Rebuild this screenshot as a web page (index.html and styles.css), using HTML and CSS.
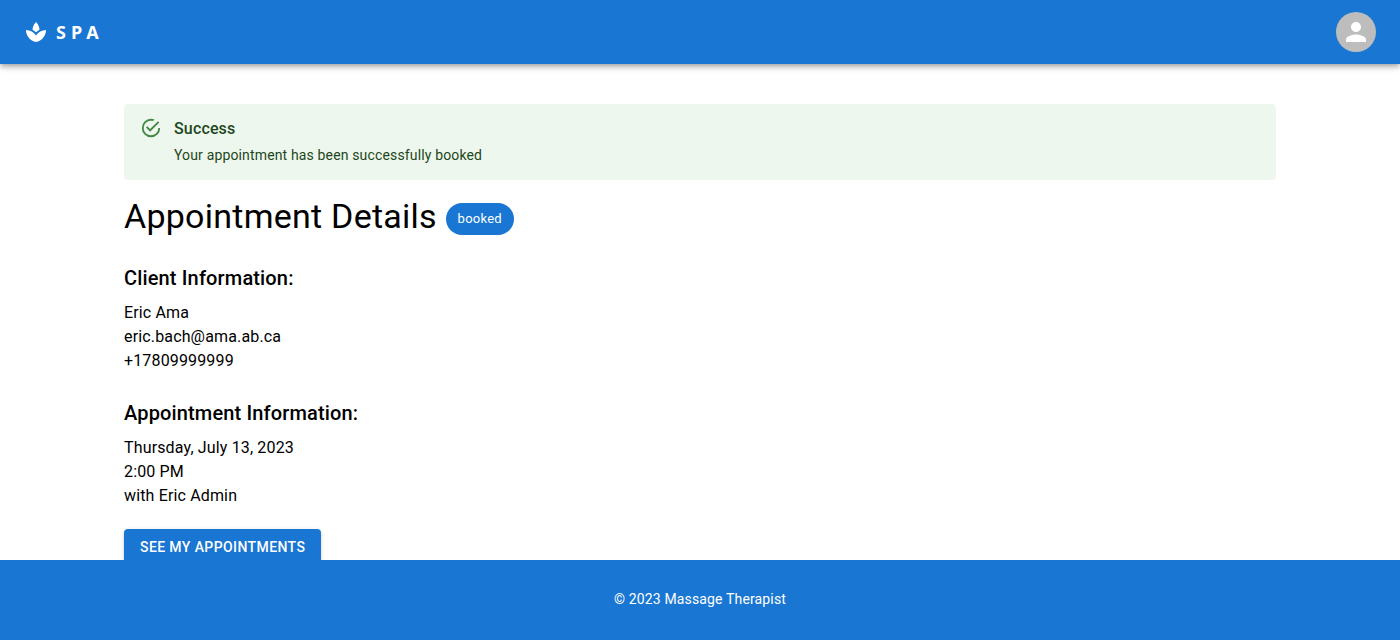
FILE: index.html
```html
<!DOCTYPE html>
<html lang="en">
<head>
<meta charset="utf-8">
<meta name="viewport" content="width=device-width, initial-scale=1">
<title>Spa – Appointment Details</title>
<link rel="stylesheet" href="styles.css">
</head>
<body>
<header class="app-bar">
  <a class="brand" href="#">
    <svg class="brand-icon" viewBox="0 0 24 24" aria-hidden="true"><path d="M8.55 12c-1.07-.71-2.25-1.27-3.53-1.61 1.28.34 2.46.9 3.53 1.61zm10.43-1.61c-1.29.34-2.49.91-3.57 1.64 1.08-.73 2.28-1.3 3.57-1.64z"/><path d="M15.49 9.63c-.18-2.79-1.31-5.51-3.43-7.63-2.14 2.14-3.32 4.86-3.55 7.63 1.28.68 2.46 1.56 3.49 2.63 1.03-1.06 2.21-1.94 3.49-2.63zm-6.5 2.65c-.14-.1-.3-.19-.45-.29.15.11.31.19.45.29zm6.42-.25c-.13.09-.27.16-.4.26.13-.1.27-.17.4-.26zM12 15.45C9.85 12.17 6.18 10 2 10c0 5.32 3.36 9.82 8.03 11.49.63.23 1.29.4 1.97.51.68-.12 1.33-.29 1.97-.51C18.64 19.82 22 15.32 22 10c-4.18 0-7.85 2.17-10 5.45z"/></svg>
    <span class="brand-name">SPA</span>
  </a>
  <button class="avatar" type="button" aria-label="Account">
    <svg class="avatar-icon" viewBox="0 0 24 24" aria-hidden="true"><path d="M12 12c2.21 0 4-1.79 4-4s-1.79-4-4-4-4 1.79-4 4 1.79 4 4 4zm0 2c-2.67 0-8 1.34-8 4v2h16v-2c0-2.66-5.33-4-8-4z"/></svg>
  </button>
</header>
<main class="container">
  <div class="alert" role="alert">
    <svg class="alert-icon" viewBox="0 0 24 24" aria-hidden="true"><path d="M20,12A8,8 0 0,1 12,20A8,8 0 0,1 4,12A8,8 0 0,1 12,4C12.76,4 13.5,4.11 14.2,4.31L15.77,2.74C14.61,2.26 13.34,2 12,2A10,10 0 0,0 2,12A10,10 0 0,0 12,22A10,10 0 0,0 22,12M7.91,10.08L6.5,11.5L11,16L21,6L19.59,4.58L11,13.17L7.91,10.08Z"/></svg>
    <div class="alert-message">
      <div class="alert-title">Success</div>
      <div>Your appointment has been successfully booked</div>
    </div>
  </div>
  <h1 class="page-title">Appointment Details <span class="chip">booked</span></h1>
  <section class="details">
    <h2 class="section-title">Client Information:</h2>
    <p class="line">Eric Ama</p>
    <p class="line">eric.bach@ama.ab.ca</p>
    <p class="line">+17809999999</p>
  </section>
  <section class="details">
    <h2 class="section-title">Appointment Information:</h2>
    <p class="line">Thursday, July 13, 2023</p>
    <p class="line">2:00 PM</p>
    <p class="line">with Eric Admin</p>
  </section>
  <button class="action" type="button">See my appointments</button>
</main>
<footer class="footer">© 2023 Massage Therapist</footer>
</body>
</html>
```
FILE: styles.css
```css
* {
  box-sizing: border-box;
}

body {
  margin: 0;
  background: #fff;
  color: #000;
  font-family: Roboto, sans-serif;
  font-size: 16px;
  line-height: 24px;
}

h1,
h2,
p {
  margin: 0;
}

.app-bar {
  position: sticky;
  top: 0;
  z-index: 1;
  display: flex;
  align-items: center;
  justify-content: space-between;
  height: 64px;
  padding: 0 24px;
  background: #1976d2;
  color: #fff;
  box-shadow: 0 2px 4px -1px rgba(0, 0, 0, 0.2), 0 4px 5px 0 rgba(0, 0, 0, 0.14), 0 1px 10px 0 rgba(0, 0, 0, 0.12);
}

.brand {
  display: flex;
  align-items: center;
  gap: 8px;
  color: inherit;
  text-decoration: none;
}

.brand-icon {
  width: 24px;
  height: 24px;
  fill: currentColor;
}

.brand-name {
  font-family: "Noto Sans", sans-serif;
  font-size: 18px;
  font-weight: 700;
  letter-spacing: 5px;
}

.avatar {
  display: flex;
  align-items: center;
  justify-content: center;
  width: 40px;
  height: 40px;
  padding: 0;
  border: 0;
  border-radius: 50%;
  background: #bdbdbd;
  color: #fff;
}

.avatar-icon {
  width: 30px;
  height: 30px;
  fill: currentColor;
}

.container {
  max-width: 1200px;
  margin: 0 auto;
  padding: 40px 24px 96px;
}

.alert {
  display: flex;
  gap: 12px;
  padding: 6px 16px;
  border-radius: 4px;
  background: #edf7ed;
  color: #1e4620;
}

.alert-icon {
  width: 22px;
  height: 22px;
  margin-top: 7px;
  fill: #2e7d32;
  opacity: 0.9;
}

.alert-message {
  padding: 9px 0;
  font-size: 14px;
  line-height: 20px;
  letter-spacing: 0.15px;
}

.alert-title {
  margin: -2px 0 4px;
  font-size: 16px;
  font-weight: 500;
  line-height: 24px;
}

.page-title {
  margin: 15px 0 25px;
  font-size: 34px;
  font-weight: 400;
  line-height: 42px;
  letter-spacing: 0.25px;
}

.chip {
  display: inline-block;
  padding: 0 12px;
  border-radius: 16px;
  background: #1976d2;
  color: #fff;
  font-size: 13px;
  line-height: 32px;
  vertical-align: middle;
}

.details + .details {
  margin-top: 24px;
}

.section-title {
  margin-bottom: 7px;
  font-size: 20px;
  font-weight: 500;
  line-height: 32px;
  letter-spacing: 0.15px;
}

.line {
  letter-spacing: 0.15px;
}

.action {
  margin-top: 21px;
  padding: 6px 16px;
  border: 0;
  border-radius: 4px;
  background: #1976d2;
  color: #fff;
  font: 500 14px/24px Roboto, sans-serif;
  letter-spacing: 0.4px;
  text-transform: uppercase;
  box-shadow: 0 3px 1px -2px rgba(0, 0, 0, 0.2), 0 2px 2px 0 rgba(0, 0, 0, 0.14), 0 1px 5px 0 rgba(0, 0, 0, 0.12);
}

.footer {
  position: fixed;
  inset: auto 0 0;
  padding: 29px 24px 31px;
  background: #1976d2;
  color: #fff;
  font-size: 14px;
  line-height: 20px;
  letter-spacing: 0.15px;
  text-align: center;
}
```
